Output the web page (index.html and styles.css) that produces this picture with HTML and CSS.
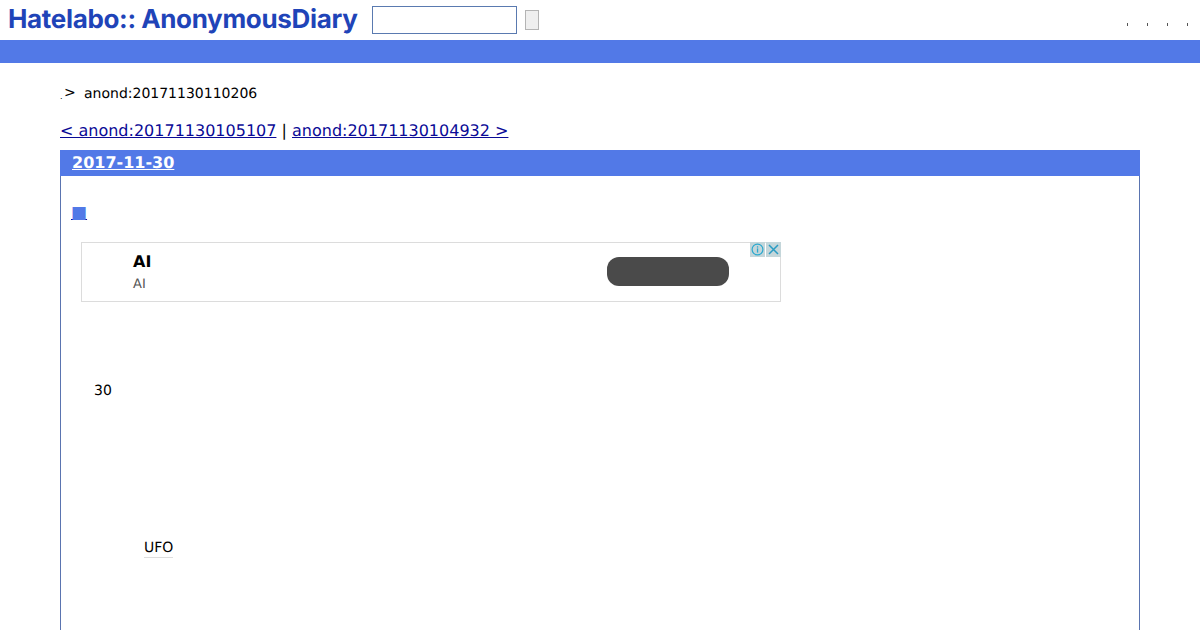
FILE: index.html
```html
<!DOCTYPE html>
<html lang="ja">
<head>
<meta charset="utf-8">
<title>anond:20171130110206</title>
<link rel="stylesheet" href="styles.css">
</head>
<body>
<header class="top">
  <div class="logo">Hatelabo:: AnonymousDiary</div>
  <input class="search" type="text">
  <button class="go" type="button"></button>
  <nav class="tools"><span></span><span></span><span></span><span></span></nav>
</header>
<div class="bar"></div>
<main class="page">
  <div class="crumb"><span class="dot">.</span><span class="gt">&gt;</span><span class="cur">anond:20171130110206</span></div>
  <div class="pager"><a href="#">&lt; anond:20171130105107</a> | <a href="#">anond:20171130104932 &gt;</a></div>
  <section class="day">
    <h2 class="day-head"><a href="#">2017-11-30</a></h2>
    <div class="body">
      <a class="mark" href="#">■</a>
      <div class="ad">
        <div class="ad-text">
          <div class="ad-title">AI</div>
          <div class="ad-sub">AI</div>
        </div>
        <div class="ad-btn"></div>
        <div class="ad-badges">
          <span class="badge"><svg viewBox="0 0 15 15" width="15" height="15"><circle cx="7.5" cy="7.5" r="5.4" fill="none" stroke="#2aa9cf" stroke-width="1.2"/><rect x="6.9" y="6.4" width="1.3" height="4.2" fill="#2aa9cf"/><rect x="6.9" y="4.3" width="1.3" height="1.3" fill="#2aa9cf"/></svg></span>
          <span class="badge"><svg viewBox="0 0 15 15" width="15" height="15"><path d="M3 3 L12 12 M12 3 L3 12" stroke="#2a9cc4" stroke-width="1.5" fill="none"/></svg></span>
        </div>
      </div>
      <p class="t30">30</p>
      <p class="ufo"><span>UFO</span></p>
    </div>
  </section>
</main>
</body>
</html>
```
FILE: styles.css
```css
* { box-sizing: border-box; }
html, body { margin: 0; padding: 0; height: 630px; overflow: hidden; background: #fff; }
body { font-family: "DejaVu Sans", sans-serif; color: #000; font-size: 14px; text-rendering: geometricPrecision; }
a { color: #0a0a96; }
.top { height: 40px; display: flex; align-items: flex-start; padding-left: 8px; }
.logo { width: 364px; margin-top: 3px; font-family: "Inter", sans-serif; font-weight: 700; font-size: 26px; line-height: 34px; color: #1f44b8; white-space: nowrap; letter-spacing: -0.33px; word-spacing: -0.5px; }
.search { width: 145px; height: 28px; margin-top: 6px; border: 1px solid #5a7ab0; background: #fff; padding: 0; }
.go { width: 14px; height: 20px; margin: 10px 0 0 8px; border: 1px solid #b4b4b4; background: #efefef; padding: 0; }
.tools { margin-left: auto; display: flex; gap: 19px; padding: 23px 12px 0 0; }
.tools span { width: 1px; height: 3px; background: #555; }
.bar { height: 23px; background: #5279e7; }
.page { padding: 0 60px; }
.crumb { display: flex; align-items: center; height: 20px; margin-top: 21px; line-height: 20px; }
.dot { font-size: 8px; width: 4px; padding-top: 6px; }
.gt { width: 20px; position: relative; top: -1px; }
.pager { margin-top: 17px; height: 20px; font-size: 16px; line-height: 20px; }
.day { margin-top: 9px; height: 480px; border: 1px solid #5a74b0; border-top: 0; border-bottom: 0; }
.day-head { margin: 0 -1px; height: 26px; background: #5279e7; padding-left: 12px; font-size: 16px; font-weight: 700; line-height: 26px; }
.day-head a { color: #fff; }
.body { padding: 27px 0 0 10px; }
.mark { display: block; width: 16px; height: 20px; font-size: 17px; line-height: 20px; color: #5279e7; text-decoration-color: #0a0a96; }
.ad { position: relative; display: flex; justify-content: space-between; align-items: center; width: 700px; height: 60px; margin: 19px 0 0 10px; border: 1px solid #dcdcdc; padding: 0 51px; }
.ad-text { padding-top: 2px; }
.ad-title { font-size: 16px; font-weight: 700; line-height: 20px; }
.ad-sub { font-size: 13px; line-height: 20px; margin-top: 3px; color: #555; }
.ad-btn { width: 122px; height: 29px; border-radius: 12px; background: #4a4a4a; margin-bottom: 2px; }
.ad-badges { position: absolute; top: -1px; right: -1px; display: flex; gap: 1px; }
.badge { width: 15px; height: 15px; display: block; background: #c4d6da; }
.badge svg { display: block; }
.t30 { margin: 79px 0 0 23px; height: 20px; line-height: 20px; }
.ufo { margin: 137px 0 0 73px; height: 20px; line-height: 20px; }
.ufo span { display: inline-block; border-bottom: 1px solid #ddd; line-height: 18px; }
```
